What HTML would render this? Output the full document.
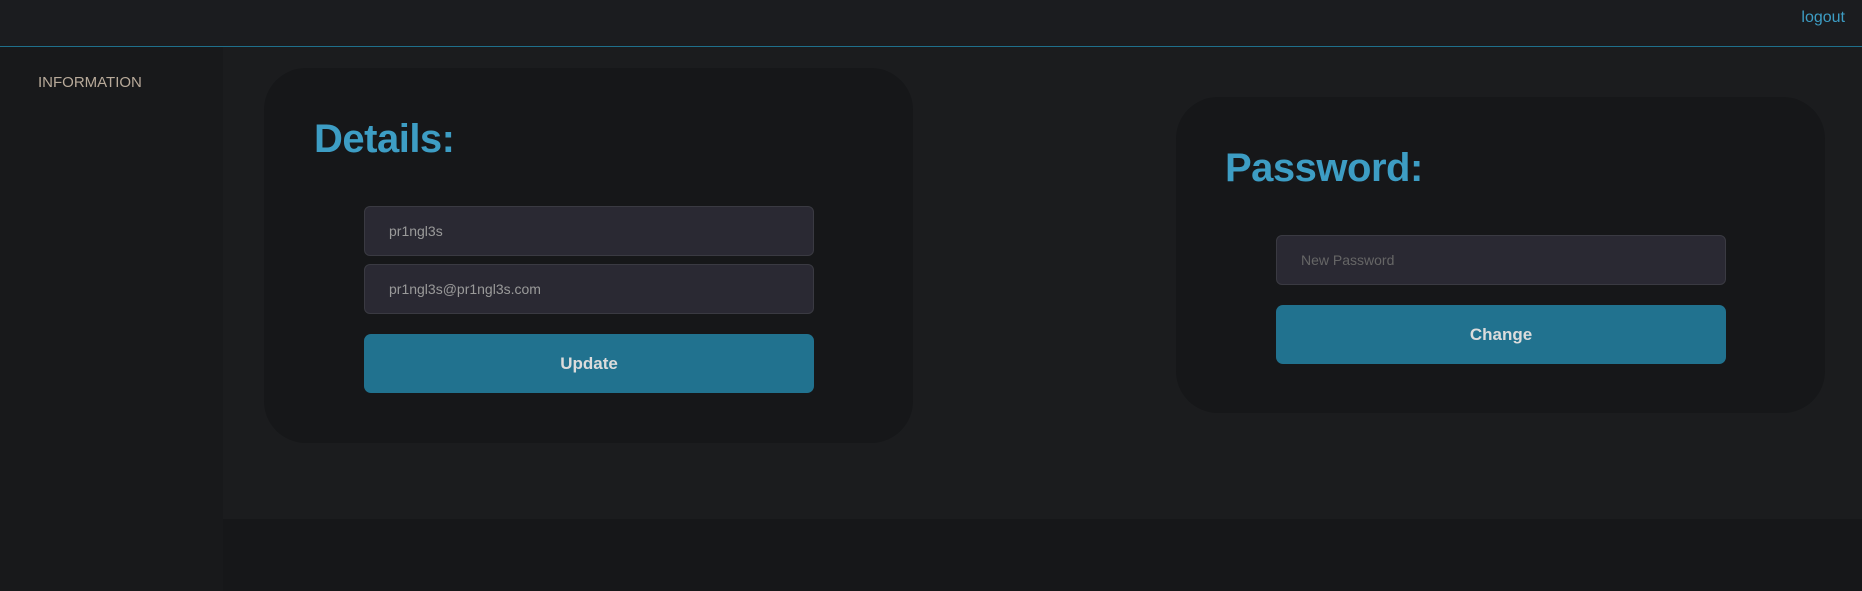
<!DOCTYPE html>
<html><head><style>
body{margin:0;width:1862px;height:591px;background:#161719;font-family:"Liberation Sans",sans-serif;position:relative;overflow:hidden}
.hdr{position:absolute;left:0;top:0;width:1862px;height:46px;background:#1b1c1f;border-bottom:1px solid #1f6f8b}
.logout{position:absolute;right:17px;top:9px;color:#3d9dc4;font-size:16px}
.side{position:absolute;left:0;top:47px;width:223px;height:544px;background:#18191b}
.info{position:absolute;left:38px;top:74px;color:#b8aa9a;font-size:15px}
.main{position:absolute;left:223px;top:47px;width:1639px;height:472px;background:#1b1c1e}
.card{position:absolute;background:#161719;border-radius:42px}
h1{position:absolute;margin:0;color:#3d9dc4;font-size:40px;font-weight:bold;letter-spacing:-0.5px}
.in{position:absolute;box-sizing:border-box;width:450px;height:50px;background:#2a2933;border:1px solid #3a3a42;border-radius:6px;color:#9a9a9a;font-size:14px;line-height:48px;padding-left:24px}
.btn{position:absolute;box-sizing:border-box;width:450px;height:59px;background:#21728f;border-radius:7px;color:#dcdcdc;font-size:17px;font-weight:bold;text-align:center;line-height:59px}
</style></head><body>
<div class="hdr"><span class="logout">logout</span></div>
<div class="side"></div><div class="info">INFORMATION</div>
<div class="main"></div>
<div class="card" style="left:264px;top:68px;width:649px;height:375px"></div>
<h1 style="left:314px;top:117px">Details:</h1>
<div class="in" style="left:364px;top:206px">pr1ngl3s</div>
<div class="in" style="left:364px;top:264px">pr1ngl3s@pr1ngl3s.com</div>
<div class="btn" style="left:364px;top:334px">Update</div>
<div class="card" style="left:1176px;top:97px;width:649px;height:316px"></div>
<h1 style="left:1225px;top:146px">Password:</h1>
<div class="in" style="left:1276px;top:235px;color:#666">New Password</div>
<div class="btn" style="left:1276px;top:305px">Change</div>
</body></html>
